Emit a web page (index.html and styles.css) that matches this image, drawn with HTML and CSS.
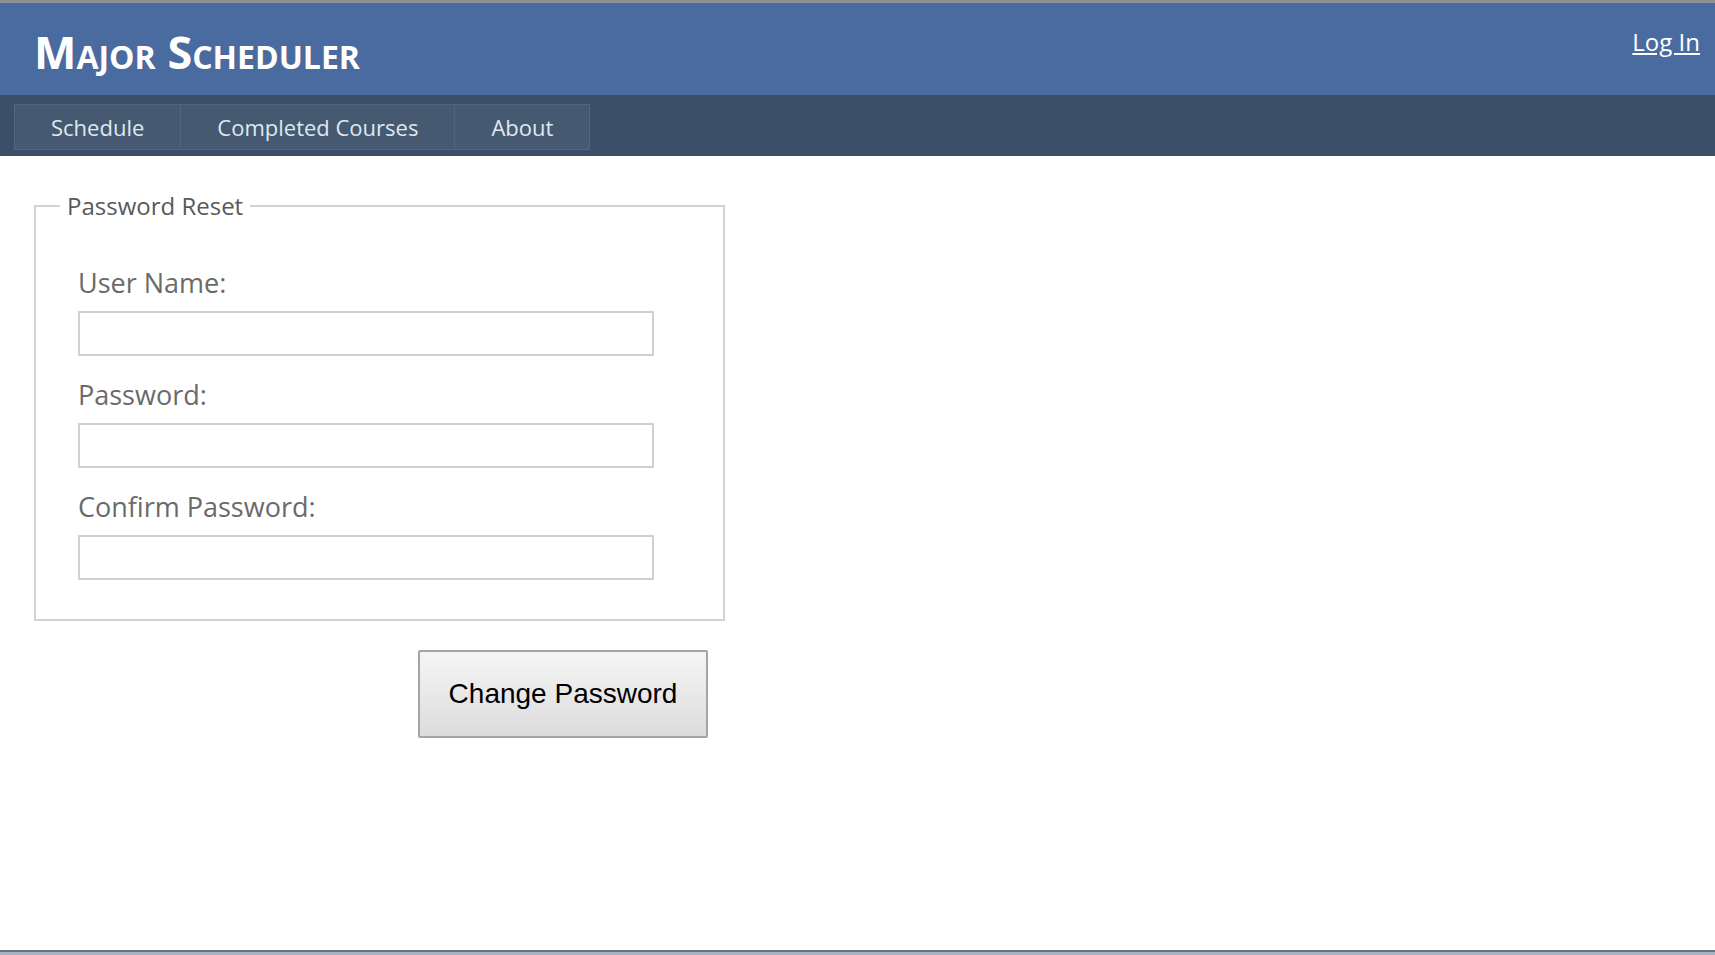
FILE: index.html
```html
<!DOCTYPE html>
<html>
<head>
<meta charset="utf-8">
<title>Major Scheduler</title>
<link rel="stylesheet" href="styles.css">
</head>
<body>
<div class="page">
  <header class="header">
    <h1 class="title">Major Scheduler</h1>
    <a class="login" href="#">Log In</a>
  </header>
  <nav class="nav">
    <a class="tab" href="#">Schedule</a>
    <a class="tab" href="#">Completed Courses</a>
    <a class="tab" href="#">About</a>
  </nav>
  <main class="main">
    <div class="form-wrap">
      <fieldset class="reset">
        <legend class="legend">Password Reset</legend>
        <div class="fields">
          <label class="label">User Name:</label>
          <input class="input" type="text">
          <label class="label">Password:</label>
          <input class="input" type="password">
          <label class="label">Confirm Password:</label>
          <input class="input last" type="password">
        </div>
      </fieldset>
      <div class="actions">
        <button class="btn" type="button">Change Password</button>
      </div>
    </div>
  </main>
  <footer class="footer"></footer>
</div>
</body>
</html>
```
FILE: styles.css
```css
html, body {
  margin: 0;
  padding: 0;
  background: #ffffff;
}
body {
  font-family: "Open Sans", "Noto Sans", sans-serif;
}
.page {
  min-height: 100vh;
  display: flex;
  flex-direction: column;
}
.header {
  border-top: 3px solid #8c9198;
  background: #4a6b9f;
  height: 92px;
  display: flex;
  justify-content: space-between;
  align-items: flex-start;
  padding: 0 15px 0 34px;
  box-sizing: content-box;
}
.title {
  margin: 26px 0 0 0;
  font-size: 45px;
  line-height: 45px;
  font-weight: 700;
  font-variant: small-caps;
  color: #ffffff;
  letter-spacing: 0;
}
.login {
  margin-top: 26px;
  font-size: 24px;
  line-height: 25px;
  color: #ffffff;
  text-decoration: underline;
}
.nav {
  background: #3b5068;
  height: 61px;
  box-sizing: border-box;
  padding: 9px 0 0 14px;
  display: flex;
  align-items: flex-start;
}
.tab {
  height: 46px;
  box-sizing: border-box;
  border: 1px solid #4f6580;
  background: #455a71;
  color: #dfe8f0;
  text-decoration: none;
  font-size: 22px;
  line-height: 44px;
  padding: 0 36px;
  margin-right: -1px;
}
.main {
  flex: 1;
}
.form-wrap {
  width: 691px;
  margin-left: 34px;
  margin-top: 33px;
}
.reset {
  margin: 0;
  border: 2px solid #d3d3d3;
  padding: 43px 24px 39px 24px;
  min-width: 0;
}
.legend {
  padding: 0 7px;
  font-size: 24px;
  color: #595959;
}
.fields {
  display: flex;
  flex-direction: column;
  align-items: flex-start;
  padding-left: 18px;
}
.label {
  font-size: 27px;
  line-height: 36px;
  color: #6a6a6a;
  margin-bottom: 10px;
}
.input {
  width: 576px;
  height: 45px;
  box-sizing: border-box;
  border: 2px solid #d0d0d0;
  margin: 0 0 21px 0;
  padding: 0 8px;
  font-size: 20px;
}
.input.last {
  margin-bottom: 0;
}
.actions {
  display: flex;
  justify-content: flex-end;
  padding-right: 17px;
  margin-top: 29px;
}
.btn {
  width: 290px;
  height: 88px;
  font-family: "Liberation Sans", Arial, sans-serif;
  font-size: 28px;
  color: #000000;
  background: linear-gradient(#f5f5f5, #dcdcdc);
  border: 2px solid #a5a5a5;
  border-radius: 2px;
}
.footer {
  height: 5px;
  border-top: 2px solid #667585;
  background: #a9b1c0;
  box-sizing: border-box;
}
```
